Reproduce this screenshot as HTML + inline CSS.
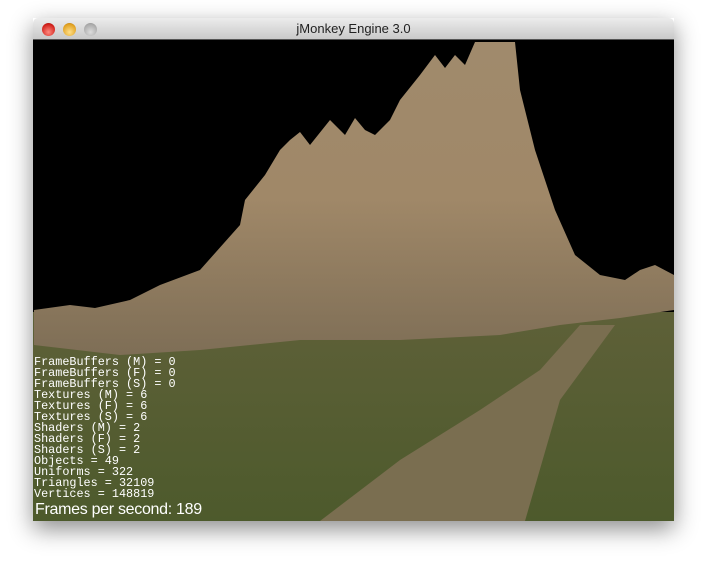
<!DOCTYPE html>
<html><head><style>
html,body{margin:0;padding:0;background:#fff;width:707px;height:569px;overflow:hidden;position:relative}
.win{position:absolute;left:33px;top:18px;width:641px;height:503px;box-shadow:0 8px 22px rgba(0,0,0,.45);}
.tb{position:absolute;left:0;top:0;width:641px;height:22px;background:linear-gradient(#ececec,#c9c9c9);border-radius:5px 5px 0 0;border-bottom:1px solid #555;box-sizing:border-box}
.tb span{position:absolute;left:0;right:0;text-align:center;top:3px;font:13px "Liberation Sans",sans-serif;color:#222}
.b{position:absolute;top:5px;width:13px;height:13px;border-radius:50%}
.c{position:absolute;left:0;top:22px;width:641px;height:481px;background:#000;overflow:hidden}
.st{position:absolute;left:1px;top:317px;font:11.8px/11px "Liberation Mono",monospace;color:#fff;white-space:pre}
.fps{position:absolute;left:2px;top:461px;font:16px "Liberation Sans",sans-serif;color:#fff;letter-spacing:-0.3px}
</style></head><body>
<div class="win">
<div class="tb">
<div class="b" style="left:9px;background:radial-gradient(circle at 50% 70%,#ff8a80,#d0201a 70%,#8a1010)"></div>
<div class="b" style="left:30px;background:radial-gradient(circle at 50% 70%,#ffe08a,#e0a020 70%,#a06a10)"></div>
<div class="b" style="left:51px;background:radial-gradient(circle at 50% 70%,#ddd,#aaa 70%,#888)"></div>
<span>jMonkey Engine 3.0</span></div>
<div class="c">
<svg width="641" height="481" viewBox="33 40 641 481" style="position:absolute;left:0;top:0">
<defs>
<linearGradient id="m" x1="0" y1="0" x2="0" y2="1"><stop offset="0" stop-color="#a08a6c"/><stop offset=".5" stop-color="#a08868"/><stop offset="1" stop-color="#7e6e56"/></linearGradient>
<linearGradient id="g" x1="0" y1="0" x2="0" y2="1"><stop offset="0" stop-color="#5e6038"/><stop offset="1" stop-color="#4d5a2c"/></linearGradient>
</defs>
<rect x="33" y="40" width="641" height="481" fill="#000"/>
<rect x="33" y="312" width="641" height="209" fill="url(#g)"/>
<polygon fill="url(#m)" points="34,310 70,305 95,308 130,300 160,285 200,270 240,225 245,200 265,175 280,150 290,140 300,132 310,145 330,120 345,135 355,118 365,130 375,135 390,120 400,100 420,75 435,55 445,68 455,55 465,65 475,42 515,42 520,90 535,150 555,210 575,255 600,275 625,280 640,270 655,265 674,275 674,310 620,318 560,325 500,335 400,340 300,340 200,350 120,355 34,345"/>
<polygon fill="#7a6e50" points="580,325 615,325 560,400 525,521 320,521 400,460 480,410 540,370"/>
</svg>
<div class="st">FrameBuffers (M) = 0
FrameBuffers (F) = 0
FrameBuffers (S) = 0
Textures (M) = 6
Textures (F) = 6
Textures (S) = 6
Shaders (M) = 2
Shaders (F) = 2
Shaders (S) = 2
Objects = 49
Uniforms = 322
Triangles = 32109
Vertices = 148819</div>
<div class="fps">Frames per second: 189</div>
</div>
</div>
</body></html>
